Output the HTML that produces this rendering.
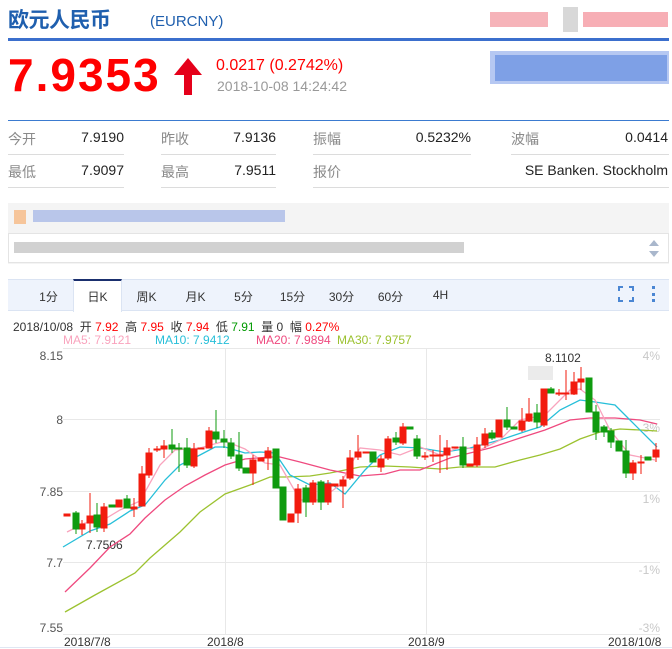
<!DOCTYPE html>
<html><head><meta charset="utf-8"><style>
*{margin:0;padding:0;box-sizing:border-box}
body{width:672px;height:649px;background:#fff;position:relative;overflow:hidden;font-family:"Liberation Sans","Noto Sans CJK SC",sans-serif}
.a{position:absolute;white-space:nowrap}
.lab{color:#8a8a8a;font-size:14px}
.val{color:#222;font-size:14px;text-align:right}
.sep{position:absolute;height:1px;background:#dcdcdc}
.tab{position:absolute;top:288px;font-size:12px;color:#333;width:49px;text-align:center}
</style></head><body>
<div class="a" style="left:8px;top:4px;font-size:21px;font-weight:bold;color:#1f5fae;letter-spacing:-0.5px">欧元人民币</div>
<div class="a" style="left:150px;top:13px;font-size:15px;color:#1f5fae">(EURCNY)</div>
<div class="a" style="left:490px;top:12px;width:58px;height:15px;background:#f4a0a8;opacity:.8"></div>
<div class="a" style="left:563px;top:7px;width:15px;height:25px;background:#d8d8d8"></div>
<div class="a" style="left:583px;top:12px;width:85px;height:15px;background:#f59aa2;opacity:.8"></div>
<div class="a" style="left:8px;top:38px;width:661px;height:3px;background:#3b6fcd"></div>
<div class="a" style="left:8px;top:48px;font-size:46px;font-weight:bold;color:#f00;letter-spacing:2px">7.9353</div>
<svg class="a" style="left:173px;top:56px" width="32" height="40"><path d="M15 2 L29 19 L19 19 L19 39 L11 39 L11 19 L1 19 Z" fill="#e5001a"/></svg>
<div class="a" style="left:216px;top:57px;font-size:16px;color:#f00">0.0217 (0.2742%)</div>
<div class="a" style="left:217px;top:78px;font-size:14px;color:#999">2018-10-08 14:24:42</div>
<div class="a" style="left:490px;top:51px;width:179px;height:33px;background:#b6c8f2"></div>
<div class="a" style="left:495px;top:55px;width:172px;height:26px;background:#7ea0e6"></div>
<div class="a" style="left:8px;top:120px;width:661px;height:1px;background:#3b7bd0"></div>

<div class="a lab" style="left:8px;top:129px">今开</div><div class="a val" style="left:40px;width:84px;top:129px">7.9190</div>
<div class="a lab" style="left:161px;top:129px">昨收</div><div class="a val" style="left:190px;width:86px;top:129px">7.9136</div>
<div class="a lab" style="left:313px;top:129px">振幅</div><div class="a val" style="left:380px;width:91px;top:129px">0.5232%</div>
<div class="a lab" style="left:511px;top:129px">波幅</div><div class="a val" style="left:580px;width:88px;top:129px">0.0414</div>
<div class="sep" style="left:8px;top:154px;width:116px"></div><div class="sep" style="left:161px;top:154px;width:115px"></div><div class="sep" style="left:313px;top:154px;width:158px"></div><div class="sep" style="left:511px;top:154px;width:158px"></div>
<div class="a lab" style="left:8px;top:162px">最低</div><div class="a val" style="left:40px;width:84px;top:162px">7.9097</div>
<div class="a lab" style="left:161px;top:162px">最高</div><div class="a val" style="left:190px;width:86px;top:162px">7.9511</div>
<div class="a lab" style="left:313px;top:162px">报价</div><div class="a val" style="left:470px;width:198px;top:162px">SE Banken. Stockholm</div>
<div class="sep" style="left:8px;top:187px;width:116px"></div><div class="sep" style="left:161px;top:187px;width:115px"></div><div class="sep" style="left:313px;top:187px;width:356px"></div>

<div class="a" style="left:8px;top:203px;width:661px;height:61px;background:#f4f4f4"></div>
<div class="a" style="left:14px;top:210px;width:12px;height:14px;background:#f6b983;opacity:.8"></div>
<div class="a" style="left:33px;top:210px;width:252px;height:12px;background:#b9c6ea"></div>
<div class="a" style="left:8px;top:233px;width:661px;height:30px;background:#fff;border:1px solid #e4e4e4"></div>
<div class="a" style="left:14px;top:242px;width:450px;height:11px;background:#c9c9c9;opacity:.85"></div>
<svg class="a" style="left:647px;top:236px" width="14" height="26"><path d="M2 10 L7 4 L12 10Z M2 15 L7 21 L12 15Z" fill="#a9b7cc"/></svg>

<div class="a" style="left:8px;top:279px;width:661px;height:32px;background:#eef3fc;border-top:1px solid #dbe4f3;border-bottom:1px solid #dbe4f3"></div>
<div class="a" style="left:73px;top:279px;width:49px;height:33px;background:#fff;border-top:2px solid #1a2f6e;border-left:1px solid #dbe4f3;border-right:1px solid #dbe4f3"></div>
<div class="tab" style="left:24px">1分</div><div class="tab" style="left:73px">日K</div><div class="tab" style="left:122px">周K</div><div class="tab" style="left:171px">月K</div><div class="tab" style="left:219px">5分</div><div class="tab" style="left:268px">15分</div><div class="tab" style="left:317px">30分</div><div class="tab" style="left:366px">60分</div><div class="tab" style="left:416px">4H</div>
<svg class="a" style="left:617px;top:285px" width="50" height="20"><path d="M2 6V2H6M12 2H16V6M16 12V16H12M6 16H2V12" stroke="#4a86d3" stroke-width="2" fill="none"/><rect x="35" y="1" width="3" height="3" fill="#4a86d3"/><rect x="35" y="8" width="3" height="3" fill="#4a86d3"/><rect x="35" y="14" width="3" height="3" fill="#4a86d3"/></svg>

<div class="a" style="left:13px;top:318px;font-size:12px;color:#333">2018/10/08&nbsp; 开 <span style="color:#f00">7.92</span>&nbsp; 高 <span style="color:#f00">7.95</span>&nbsp; 收 <span style="color:#f00">7.94</span>&nbsp; 低 <span style="color:#090">7.91</span>&nbsp; 量 0&nbsp; 幅 <span style="color:#f00">0.27%</span></div>
<div class="a" style="left:63px;top:333px;font-size:12px;color:#f9a3bd">MA5: 7.9121</div>
<div class="a" style="left:155px;top:333px;font-size:12px;color:#27bfd9">MA10: 7.9412</div>
<div class="a" style="left:256px;top:333px;font-size:12px;color:#ef4a7f">MA20: 7.9894</div>
<div class="a" style="left:337px;top:333px;font-size:12px;color:#9cc230">MA30: 7.9757</div>

<svg class="a" style="left:0;top:0" width="672" height="649" font-family="Liberation Sans,sans-serif">
<g stroke="#e8e8e8" stroke-width="1">
<line x1="63" y1="348.5" x2="660" y2="348.5"/><line x1="63" y1="419.5" x2="660" y2="419.5"/><line x1="63" y1="491.5" x2="660" y2="491.5"/><line x1="63" y1="562.5" x2="660" y2="562.5"/><line x1="63" y1="634.5" x2="660" y2="634.5"/>
<line x1="225.5" y1="348" x2="225.5" y2="634"/><line x1="426.5" y1="348" x2="426.5" y2="634"/>
</g>
<line x1="0" y1="647.5" x2="672" y2="647.5" stroke="#dfe7f3"/>
<g font-size="12" fill="#555" text-anchor="end">
<text x="63" y="360">8.15</text><text x="63" y="424">8</text><text x="63" y="496">7.85</text><text x="63" y="567">7.7</text><text x="63" y="632">7.55</text></g>
<g font-size="12" fill="#c8c8c8" text-anchor="end">
<text x="660" y="360">4%</text><text x="660" y="432">3%</text><text x="660" y="503">1%</text><text x="660" y="574">-1%</text><text x="660" y="632">-3%</text></g>
<g font-size="12" fill="#333">
<text x="64" y="646">2018/7/8</text><text x="207" y="646">2018/8</text><text x="408" y="646">2018/9</text><text x="608" y="646">2018/10/8</text>
<text x="86" y="549">7.7506</text><text x="545" y="362">8.1102</text></g>
<rect x="528" y="366" width="25" height="14" fill="#ddd" opacity=".6"/>
<g fill="none" stroke-width="1.3">
<polyline stroke="#9cc230" points="65,612 95,595 135,573 150,558 180,532 200,512 225,494 250,485 270,477 285,477 310,476 330,473 360,467 385,466 410,467 440,469 460,467 495,467 520,460 540,455 560,449 580,439 600,432 620,429 640,430 657,431"/>
<polyline stroke="#ef4a7f" points="65,592 90,568 110,547 130,534 145,518 165,500 185,486 205,475 225,465 245,459 270,457 280,457 300,462 330,470 360,476 385,474 400,470 420,470 450,458 470,453 490,448 520,438 545,430 570,420 590,418 615,418 640,420 657,424"/>
<polyline stroke="#27bfd9" points="63,547 90,531 110,524 130,511 145,505 165,480 180,465 200,455 215,447 225,447 245,453 260,452 275,453 290,475 310,485 330,483 345,494 365,470 380,455 400,447 420,448 445,452 470,448 500,440 530,430 540,427 560,410 580,400 595,402 615,405 630,420 657,447"/>
<polyline stroke="#f9a3bd" points="67,532 85,523 100,522 120,510 140,501 160,465 175,450 200,448 225,441 245,449 265,463 280,465 300,500 320,500 340,485 360,448 380,450 400,455 420,447 440,455 460,447 480,450 500,440 520,420 545,415 570,390 580,389 595,400 610,430 630,455 655,460"/>
</g>
<g stroke-width="1">
<g fill="#f21b0e" stroke="#f21b0e">
<rect x="64" y="514" width="6" height="2"/><rect x="79" y="524" width="6" height="5"/><line x1="82" y1="520" x2="82" y2="535"/>
<line x1="90" y1="493" x2="90" y2="533"/><rect x="87" y="516" width="6" height="7"/>
<line x1="104" y1="503" x2="104" y2="532"/><rect x="101" y="507" width="6" height="21"/>
<rect x="116" y="500" width="6" height="7"/><rect x="131" y="507" width="6" height="2"/><line x1="134" y1="498" x2="134" y2="517"/>
<line x1="142" y1="466" x2="142" y2="506"/><rect x="139" y="474" width="6" height="32"/>
<line x1="149" y1="448" x2="149" y2="478"/><rect x="146" y="453" width="6" height="22"/>
<rect x="154" y="449" width="6" height="1"/><line x1="157" y1="446" x2="157" y2="452"/>
<line x1="164" y1="440" x2="164" y2="458"/><rect x="161" y="446" width="6" height="3"/>
<line x1="194" y1="443" x2="194" y2="468"/><rect x="191" y="449" width="6" height="17"/>
<rect x="198" y="448" width="6" height="1"/><rect x="206" y="431" width="6" height="17"/><line x1="209" y1="427" x2="209" y2="448"/>
<line x1="253" y1="455" x2="253" y2="485"/><rect x="250" y="460" width="6" height="13"/>
<rect x="258" y="458" width="6" height="3"/><line x1="268" y1="447" x2="268" y2="470"/><rect x="265" y="451" width="6" height="7"/>
<rect x="288" y="514" width="6" height="8"/><line x1="298" y1="484" x2="298" y2="523"/><rect x="295" y="489" width="6" height="24"/>
<line x1="313" y1="480" x2="313" y2="505"/><rect x="310" y="483" width="6" height="19"/><rect x="325" y="484" width="6" height="18"/><line x1="328" y1="480" x2="328" y2="505"/>
<rect x="332" y="484" width="6" height="2"/><rect x="340" y="480" width="6" height="6"/><line x1="343" y1="476" x2="343" y2="508"/>
<line x1="350" y1="450" x2="350" y2="480"/><rect x="347" y="458" width="6" height="20"/><line x1="358" y1="435" x2="358" y2="460"/><rect x="355" y="452" width="6" height="5"/>
<rect x="363" y="452" width="6" height="1"/><rect x="378" y="459" width="6" height="8"/><line x1="381" y1="455" x2="381" y2="472"/>
<line x1="388" y1="436" x2="388" y2="460"/><rect x="385" y="439" width="6" height="19"/><line x1="403" y1="423" x2="403" y2="445"/><rect x="400" y="427" width="6" height="16"/>
<rect x="422" y="456" width="6" height="1"/><line x1="425" y1="452" x2="425" y2="460"/><rect x="430" y="455" width="6" height="1"/><line x1="433" y1="450" x2="433" y2="462"/><rect x="437" y="455" width="6" height="1"/><line x1="440" y1="435" x2="440" y2="473"/>
<rect x="444" y="448" width="6" height="7"/><line x1="447" y1="440" x2="447" y2="470"/><rect x="452" y="447" width="6" height="1"/><rect x="467" y="464" width="6" height="2"/><line x1="477" y1="437" x2="477" y2="467"/><rect x="474" y="445" width="6" height="20"/>
<line x1="485" y1="428" x2="485" y2="448"/><rect x="482" y="434" width="6" height="11"/><rect x="496" y="420" width="6" height="17"/><rect x="519" y="421" width="6" height="9"/><line x1="522" y1="408" x2="522" y2="432"/>
<line x1="529" y1="398" x2="529" y2="422"/><rect x="526" y="414" width="6" height="7"/><line x1="544" y1="389" x2="544" y2="427"/><rect x="541" y="389" width="6" height="36"/>
<rect x="556" y="393" width="6" height="1"/><line x1="559" y1="389" x2="559" y2="396"/><rect x="563" y="393" width="6" height="1"/><line x1="566" y1="370" x2="566" y2="400"/><rect x="571" y="382" width="6" height="12"/><line x1="574" y1="372" x2="574" y2="395"/>
<rect x="578" y="379" width="6" height="3"/><line x1="581" y1="367" x2="581" y2="390"/><rect x="630" y="463" width="6" height="10"/><line x1="633" y1="460" x2="633" y2="480"/><rect x="638" y="462" width="6" height="1"/><line x1="641" y1="455" x2="641" y2="474"/><rect x="653" y="450" width="6" height="7"/><line x1="656" y1="443" x2="656" y2="462"/>
</g>
<g fill="#0f9b0f" stroke="#0f9b0f">
<rect x="73" y="513" width="6" height="16"/><line x1="76" y1="511" x2="76" y2="534"/><rect x="94" y="515" width="6" height="12"/><line x1="97" y1="503" x2="97" y2="532"/>
<rect x="109" y="505" width="6" height="2"/><rect x="124" y="499" width="6" height="9"/><line x1="127" y1="495" x2="127" y2="508"/>
<line x1="172" y1="429" x2="172" y2="453"/><rect x="169" y="445" width="6" height="4"/><rect x="176" y="448" width="6" height="1"/><line x1="179" y1="443" x2="179" y2="472"/>
<line x1="187" y1="438" x2="187" y2="468"/><rect x="184" y="448" width="6" height="17"/>
<line x1="216" y1="410" x2="216" y2="443"/><rect x="213" y="432" width="6" height="7"/><rect x="221" y="439" width="6" height="3"/><line x1="224" y1="430" x2="224" y2="448"/>
<rect x="228" y="443" width="6" height="13"/><line x1="231" y1="438" x2="231" y2="459"/><rect x="236" y="455" width="6" height="13"/><line x1="239" y1="432" x2="239" y2="471"/>
<rect x="243" y="468" width="6" height="5"/><rect x="273" y="449" width="6" height="39"/><rect x="280" y="487" width="6" height="33"/>
<rect x="303" y="488" width="6" height="14"/><line x1="306" y1="485" x2="306" y2="517"/><rect x="318" y="482" width="6" height="20"/><line x1="321" y1="480" x2="321" y2="510"/>
<rect x="370" y="452" width="6" height="10"/><rect x="393" y="438" width="6" height="4"/><line x1="396" y1="432" x2="396" y2="445"/><rect x="407" y="427" width="6" height="2"/>
<rect x="414" y="439" width="6" height="17"/><line x1="417" y1="435" x2="417" y2="459"/><rect x="460" y="447" width="6" height="18"/><line x1="463" y1="437" x2="463" y2="468"/>
<rect x="489" y="433" width="6" height="5"/><line x1="492" y1="430" x2="492" y2="440"/><rect x="504" y="420" width="6" height="7"/><line x1="507" y1="407" x2="507" y2="430"/><rect x="511" y="427" width="6" height="2"/>
<rect x="534" y="413" width="6" height="9"/><line x1="537" y1="404" x2="537" y2="428"/><rect x="548" y="389" width="6" height="4"/><line x1="551" y1="387" x2="551" y2="393"/>
<rect x="586" y="378" width="6" height="34"/><rect x="593" y="412" width="6" height="20"/><line x1="596" y1="405" x2="596" y2="440"/><rect x="601" y="427" width="6" height="5"/><line x1="604" y1="425" x2="604" y2="437"/>
<rect x="608" y="431" width="6" height="11"/><line x1="611" y1="428" x2="611" y2="448"/><rect x="616" y="441" width="6" height="10"/><rect x="623" y="451" width="6" height="22"/><line x1="626" y1="440" x2="626" y2="478"/><rect x="645" y="457" width="6" height="3"/>
</g>
</g>
</svg>
</body></html>
